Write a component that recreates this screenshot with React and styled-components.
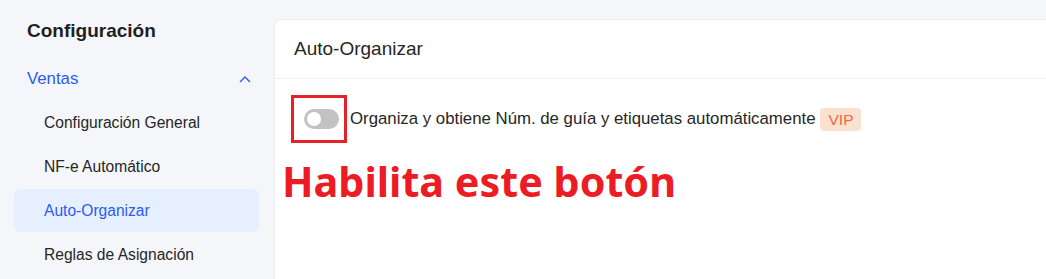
import React, { useState } from 'react'
import styled, { createGlobalStyle } from 'styled-components'

const GlobalStyle = createGlobalStyle`
  html, body {
    margin: 0;
    padding: 0;
    background: #f5f6f9;
    font-family: "Liberation Sans", Arial, sans-serif;
    overflow: hidden;
  }
`

const Page = styled.div`
  display: flex;
  width: 1046px;
  height: 279px;
  background: #f5f6f9;
`

const Sidebar = styled.aside`
  width: 274px;
  flex-shrink: 0;
  padding: 20px 15px 0 14px;
  box-sizing: border-box;
`

const SideTitle = styled.h2`
  margin: 0 0 0 13px;
  font-size: 19px;
  font-weight: 700;
  color: #1f1f1f;
  line-height: 22px;
`

const Group = styled.div`
  display: flex;
  align-items: center;
  justify-content: space-between;
  height: 44px;
  margin-top: 15px;
  padding: 0 8px 0 13px;
  color: #2b5cf0;
  font-size: 16.8px;
  cursor: pointer;
`

const SubList = styled.ul`
  list-style: none;
  margin: 0;
  padding: 0;
  display: flex;
  flex-direction: column;
  gap: 1px;
`

const SubItem = styled.li`
  height: 43px;
  display: flex;
  align-items: center;
  padding-left: 30px;
  border-radius: 6px;
  font-size: 15.6px;
  color: ${p => (p.active ? '#2b5cf0' : '#262626')};
  background: ${p => (p.active ? '#e5effe' : 'transparent')};
  cursor: pointer;
`

const Card = styled.section`
  flex: 1;
  margin-top: 19px;
  background: #fff;
  border-radius: 8px 0 0 0;
  border: 1px solid #eceef2;
  border-right: none;
  border-bottom: none;
`

const CardHeader = styled.header`
  height: 58px;
  display: flex;
  align-items: center;
  padding-left: 19px;
  font-size: 19px;
  color: #262626;
  border-bottom: 1px solid #eceef2;
`

const CardBody = styled.div`
  padding: 16px 8px 0 16px;
`

const Row = styled.div`
  display: flex;
  align-items: center;
  font-size: 16.8px;
  color: #262626;
`

const Mark = styled.span`
  display: inline-flex;
  align-items: center;
  justify-content: center;
  width: 56px;
  height: 48px;
  box-sizing: border-box;
  border: 3px solid #e8202a;
  margin-right: 3px;
`

const Switch = styled.button`
  position: relative;
  width: 35px;
  height: 20px;
  margin-left: 4px;
  padding: 0;
  border: none;
  border-radius: 10px;
  background: ${p => (p.on ? '#2b5cf0' : '#c2c2c2')};
  cursor: pointer;

  &::after {
    content: '';
    position: absolute;
    top: 3px;
    left: ${p => (p.on ? '18px' : '3px')};
    width: 14px;
    height: 14px;
    border-radius: 50%;
    background: #fff;
    transition: left 0.2s;
  }
`

const Badge = styled.span`
  margin-left: 5px;
  padding: 3px 8px;
  border-radius: 4px;
  background: #fde1d0;
  color: #f5663a;
  font-size: 15.5px;
  line-height: 17px;
`

const Annotation = styled.div`
  margin: 14px 0 0 -9px;
  font-family: "Noto Sans", "Open Sans", sans-serif;
  font-weight: 700;
  font-size: 41.3px;
  line-height: 48px;
  color: #ed1c24;
`

const Chevron = () => (
  <svg width="12" height="8" viewBox="0 0 12 8">
    <path d="M1 7 L6 2 L11 7" fill="none" stroke="#2b5cf0" strokeWidth="1.4" />
  </svg>
)

const items = ['Configuración General', 'NF-e Automático', 'Auto-Organizar', 'Reglas de Asignación']

export default function App() {
  const [on, setOn] = useState(false)
  return (
    <Page>
      <GlobalStyle />
      <Sidebar>
        <SideTitle>Configuración</SideTitle>
        <Group>
          Ventas
          <Chevron />
        </Group>
        <SubList>
          {items.map(it => (
            <SubItem key={it} active={it === 'Auto-Organizar'}>{it}</SubItem>
          ))}
        </SubList>
      </Sidebar>
      <Card>
        <CardHeader>Auto-Organizar</CardHeader>
        <CardBody>
          <Row>
            <Mark>
              <Switch on={on} onClick={() => setOn(!on)} />
            </Mark>
            Organiza y obtiene Núm. de guía y etiquetas automáticamente
            <Badge>VIP</Badge>
          </Row>
          <Annotation>Habilita este botón</Annotation>
        </CardBody>
      </Card>
    </Page>
  )
}
